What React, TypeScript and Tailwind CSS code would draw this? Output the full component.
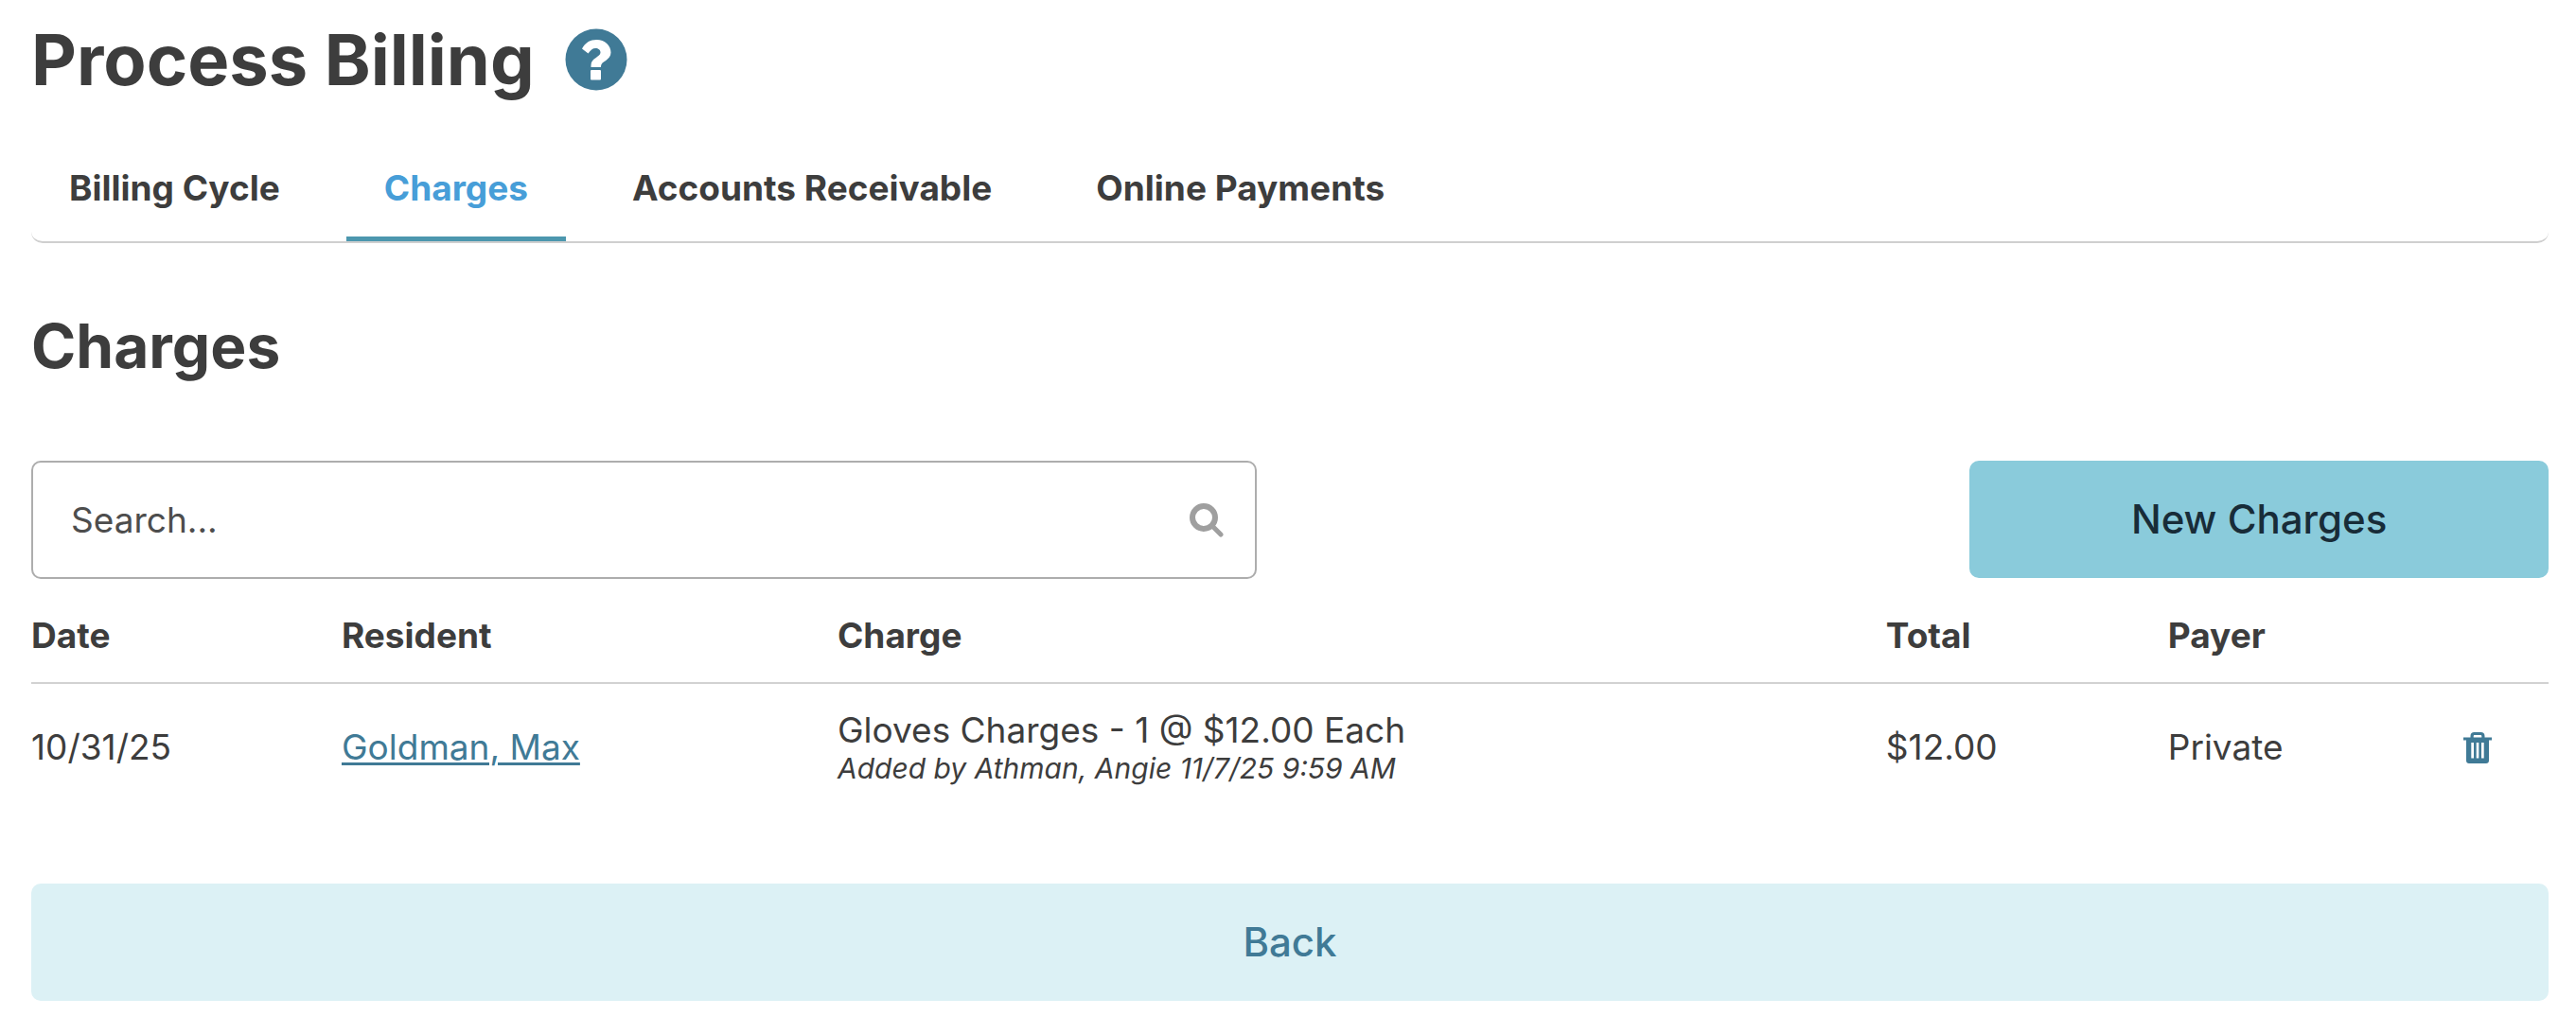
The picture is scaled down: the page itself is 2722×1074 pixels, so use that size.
import clsx from 'clsx';

const tabs = ['Billing Cycle', 'Charges', 'Accounts Receivable', 'Online Payments'];

const charges = [
  {
    id: 1,
    date: '10/31/25',
    resident: 'Goldman, Max',
    charge: 'Gloves Charges - 1 @ $12.00 Each',
    addedBy: 'Added by Athman, Angie 11/7/25 9:59 AM',
    total: '$12.00',
    payer: 'Private',
  },
];

function HelpIcon() {
  return (
    <svg viewBox="0 0 66 66" className="w-[66px] h-[66px]" aria-hidden="true">
      <circle cx="33" cy="33" r="32.5" fill="#407a96" />
      <path
        d="M18 21.500C21.500 15 26.500 12 33.500 12C42 12 48.500 18 48.500 25.500C48.500 34 38 34.500 38 40V41H27.500V39C27.500 31 37.500 30.500 37.500 25.500C37.500 22.500 35 21 32.500 21C29 21 27 23 24.500 26.500Z"
        fill="#fff"
      />
      <rect x="27" y="44" width="11" height="10.5" rx="1" fill="#fff" />
    </svg>
  );
}

function SearchIcon() {
  return (
    <svg viewBox="0 0 36 36" className="w-[36px] h-[36px] shrink-0" fill="none" stroke="#9f9f9f" aria-hidden="true">
      <circle cx="15" cy="15" r="12" strokeWidth="6" />
      <path d="M24 24L33 33" strokeWidth="5" strokeLinecap="round" />
    </svg>
  );
}

function TrashIcon() {
  return (
    <svg viewBox="0 0 30 33" className="w-[30px] h-[33px]" aria-hidden="true">
      <path
        fillRule="evenodd"
        d="M0 5.500H7.500V4C7.500 1.500 9 0 11.500 0H18.500C21 0 22.500 1.500 22.500 4V5.500H30V8.500H27V30C27 31.800 25.800 33 24 33H6C4.200 33 3 31.800 3 30V8.500H0ZM10.700 5.500H19.300V4.300C19.300 3.500 18.800 3 18 3H12C11.200 3 10.700 3.500 10.700 4.300ZM8.300 11V27.500H11V11ZM13.700 11V27.500H16.300V11ZM19 11V27.500H21.700V11Z"
        fill="#407a96"
      />
    </svg>
  );
}

export default function App() {
  return (
    <main className="pr-[29px] pb-4 pl-[33px] font-['Inter',sans-serif] text-[37px] leading-[46px] text-[#3d3d3d]">
      <header className="flex items-center gap-8 pt-[17px]">
        <h1 className="text-[74px] leading-[92px] font-bold">Process Billing</h1>
        <button type="button" aria-label="Help">
          <HelpIcon />
        </button>
      </header>

      <nav className="mt-[27px] flex gap-[30px] rounded-xl border-b-2 border-[#cfcfcf] font-bold">
        {tabs.map((tab) => (
          <button
            key={tab}
            type="button"
            className={clsx(
              'border-b-[5px] px-[40px] pt-[40px] pb-[28px]',
              tab === 'Charges' ? 'border-[#4c97ae] text-[#479ed8]' : 'border-transparent'
            )}
          >
            {tab}
          </button>
        ))}
      </nav>

      <h2 className="mt-[70px] text-[64px] leading-[78px] font-bold">Charges</h2>

      <div className="mt-[82px] flex items-start justify-between">
        <label className="flex h-[125px] w-[48.7%] items-center rounded-[10px] border-2 border-[#adadad] pr-[33px] pl-[40px]">
          <input
            type="text"
            aria-label="Search"
            placeholder="Search..."
            className="min-w-0 grow outline-none placeholder:text-[#4d4d4d]"
          />
          <SearchIcon />
        </label>
        <button
          type="button"
          className="h-[124px] w-[23%] rounded-[10px] bg-[#8acbdb] text-[42px] font-medium text-[#182c38]"
        >
          New Charges
        </button>
      </div>

      <table className="w-full table-fixed text-left">
        <colgroup>
          <col className="w-[12.33%]" />
          <col className="w-[19.7%]" />
          <col className="w-[41.65%]" />
          <col className="w-[11.2%]" />
          <col className="w-[11.75%]" />
          <col />
        </colgroup>
        <thead>
          <tr className="border-b-2 border-[#d2d2d2]">
            <th className="pt-[37px] pb-[26px]">Date</th>
            <th className="pt-[37px] pb-[26px]">Resident</th>
            <th className="pt-[37px] pb-[26px]">Charge</th>
            <th className="pt-[37px] pb-[26px]">Total</th>
            <th className="pt-[37px] pb-[26px]">Payer</th>
            <th aria-label="Actions" />
          </tr>
        </thead>
        <tbody>
          {charges.map((item) => (
            <tr key={item.id}>
              <td>{item.date}</td>
              <td>
                <a href="#" className="text-[#407a96] underline decoration-[3px] underline-offset-[3px]">
                  {item.resident}
                </a>
              </td>
              <td className="pt-[26px] pb-[28px]">
                <div>{item.charge}</div>
                <div className="text-[30px] leading-[34px] italic">{item.addedBy}</div>
              </td>
              <td>{item.total}</td>
              <td>{item.payer}</td>
              <td>
                <button type="button" aria-label="Delete charge" className="block">
                  <TrashIcon />
                </button>
              </td>
            </tr>
          ))}
        </tbody>
      </table>

      <button
        type="button"
        className="mt-[77px] h-[124px] w-full rounded-[10px] bg-[#dcf1f5] text-[42px] font-medium text-[#407a96]"
      >
        Back
      </button>
    </main>
  );
}
